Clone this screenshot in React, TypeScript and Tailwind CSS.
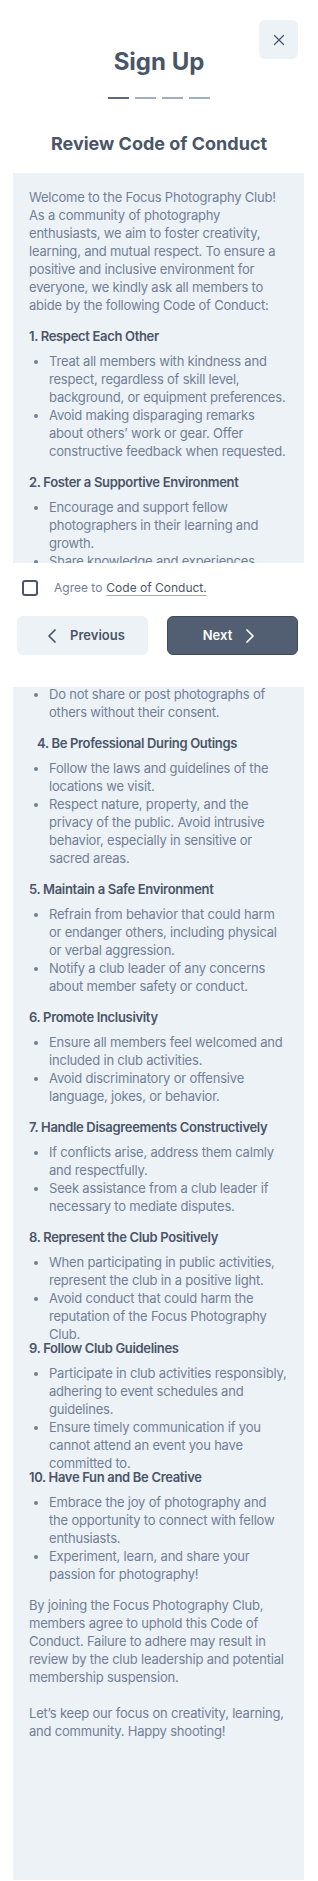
import React from "react";
import { X, ChevronLeft, ChevronRight } from "lucide-react";

type Section = {
  title: string;
  items: string[];
  headClass?: string;
};

const sections: Section[] = [
  {
    title: "1. Respect Each Other",
    items: [
      "Treat all members with kindness and respect, regardless of skill level, background, or equipment preferences.",
      "Avoid making disparaging remarks about others’ work or gear. Offer constructive feedback when requested.",
    ],
  },
  {
    title: "2. Foster a Supportive Environment",
    items: [
      "Encourage and support fellow photographers in their learning and growth.",
      "Share knowledge and experiences generously to help others grow.",
    ],
  },
  {
    title: "3. Respect Privacy and Consent",
    headClass: "!mt-[21px]",
    items: [
      "Always ask for permission before photographing individuals in private settings.",
      "Do not share or post photographs of others without their consent.",
    ],
  },
  {
    title: "4. Be Professional During Outings",
    headClass: "ml-2",
    items: [
      "Follow the laws and guidelines of the locations we visit.",
      "Respect nature, property, and the privacy of the public. Avoid intrusive behavior, especially in sensitive or sacred areas.",
    ],
  },
  {
    title: "5. Maintain a Safe Environment",
    items: [
      "Refrain from behavior that could harm or endanger others, including physical or verbal aggression.",
      "Notify a club leader of any concerns about member safety or conduct.",
    ],
  },
  {
    title: "6. Promote Inclusivity",
    items: [
      "Ensure all members feel welcomed and included in club activities.",
      "Avoid discriminatory or offensive language, jokes, or behavior.",
    ],
  },
  {
    title: "7. Handle Disagreements Constructively",
    items: [
      "If conflicts arise, address them calmly and respectfully.",
      "Seek assistance from a club leader if necessary to mediate disputes.",
    ],
  },
  {
    title: "8. Represent the Club Positively",
    items: [
      "When participating in public activities, represent the club in a positive light.",
      "Avoid conduct that could harm the reputation of the Focus Photography Club.",
    ],
  },
  {
    title: "9. Follow Club Guidelines",
    headClass: "!-mt-px",
    items: [
      "Participate in club activities responsibly, adhering to event schedules and guidelines.",
      "Ensure timely communication if you cannot attend an event you have committed to.",
    ],
  },
  {
    title: "10. Have Fun and Be Creative",
    headClass: "!-mt-px",
    items: [
      "Embrace the joy of photography and the opportunity to connect with fellow enthusiasts.",
      "Experiment, learn, and share your passion for photography!",
    ],
  },
];

export default function App() {
  return (
    <div className="relative min-h-screen bg-white font-['Inter',sans-serif]">
      {/* Close */}
      <button className="absolute top-5 right-5 flex h-[39px] w-[39px] items-center justify-center rounded-md bg-[#edf2f7] text-[#4a5568]">
        <X size={18} strokeWidth={1.75} />
      </button>

      {/* Header */}
      <div className="flex flex-col items-center pt-[46px]">
        <h1 className="text-2xl leading-8 font-bold text-[#4a5568]">Sign Up</h1>
        <div className="mt-[19px] flex gap-[6px]">
          <span className="h-[2px] w-[21px] bg-[#5f6b7d]" />
          <span className="h-[2px] w-[21px] bg-[#a0aec0]" />
          <span className="h-[2px] w-[21px] bg-[#a0aec0]" />
          <span className="h-[2px] w-[21px] bg-[#a0aec0]" />
        </div>
        <h2 className="mt-[31px] text-lg leading-7 font-bold text-[#4a5568]">
          Review Code of Conduct
        </h2>
      </div>

      {/* Code of conduct text */}
      <div className="mt-[15px] ml-[13px] mr-[14px] bg-[#edf2f7] px-4 pt-[15px] pb-[140px] text-[13px] leading-[18px] tracking-[-0.2px] text-[#718096]">
        <p>
          Welcome to the Focus Photography Club! As a community of photography
          enthusiasts, we aim to foster creativity, learning, and mutual respect.
          To ensure a positive and inclusive environment for everyone, we kindly
          ask all members to abide by the following Code of Conduct:
        </p>

        {sections.map((s) => (
          <div key={s.title}>
            <h3
              className={`mt-4 mb-[10px] text-[13px] leading-[12px] font-semibold tracking-tight text-[#4a5568] ${s.headClass ?? ""}`}
            >
              {s.title}
            </h3>
            <ul className="list-disc pl-5">
              {s.items.map((item) => (
                <li key={item}>{item}</li>
              ))}
            </ul>
          </div>
        ))}

        <p className="mt-[13px]">
          By joining the Focus Photography Club, members agree to uphold this
          Code of Conduct. Failure to adhere may result in review by the club
          leadership and potential membership suspension.
        </p>
        <p className="mt-[18px]">
          Let’s keep our focus on creativity, learning, and community. Happy
          shooting!
        </p>
      </div>

      <div className="absolute top-[563px] left-0 right-0 h-[124px] bg-white pt-[17px]">
        <label className="flex items-center pl-[22px]">
          <span className="h-4 w-4 rounded-[3px] border-2 border-[#4a5568]" />
          <span className="ml-4 text-xs text-[#718096]">Agree to</span>
          <span className="ml-1 text-xs text-[#4a5568] underline decoration-[#a0aec0] underline-offset-[3px]">
            Code of Conduct.
          </span>
        </label>
        <div className="mt-5 grid grid-cols-2 gap-[19px] pl-[17px] pr-[20px]">
          <button className="flex h-[39px] items-center justify-center gap-[6px] rounded-md bg-[#edf2f7] text-[13px] font-semibold text-[#4a5568]">
            <ChevronLeft size={24} strokeWidth={1.75} />
            Previous
          </button>
          <button className="flex h-[39px] items-center justify-center gap-[6px] rounded-md border border-[#3f4a5c] bg-[#525e72] text-[13px] font-semibold text-white">
            Next
            <ChevronRight size={24} strokeWidth={1.75} />
          </button>
        </div>
      </div>
    </div>
  );
}
